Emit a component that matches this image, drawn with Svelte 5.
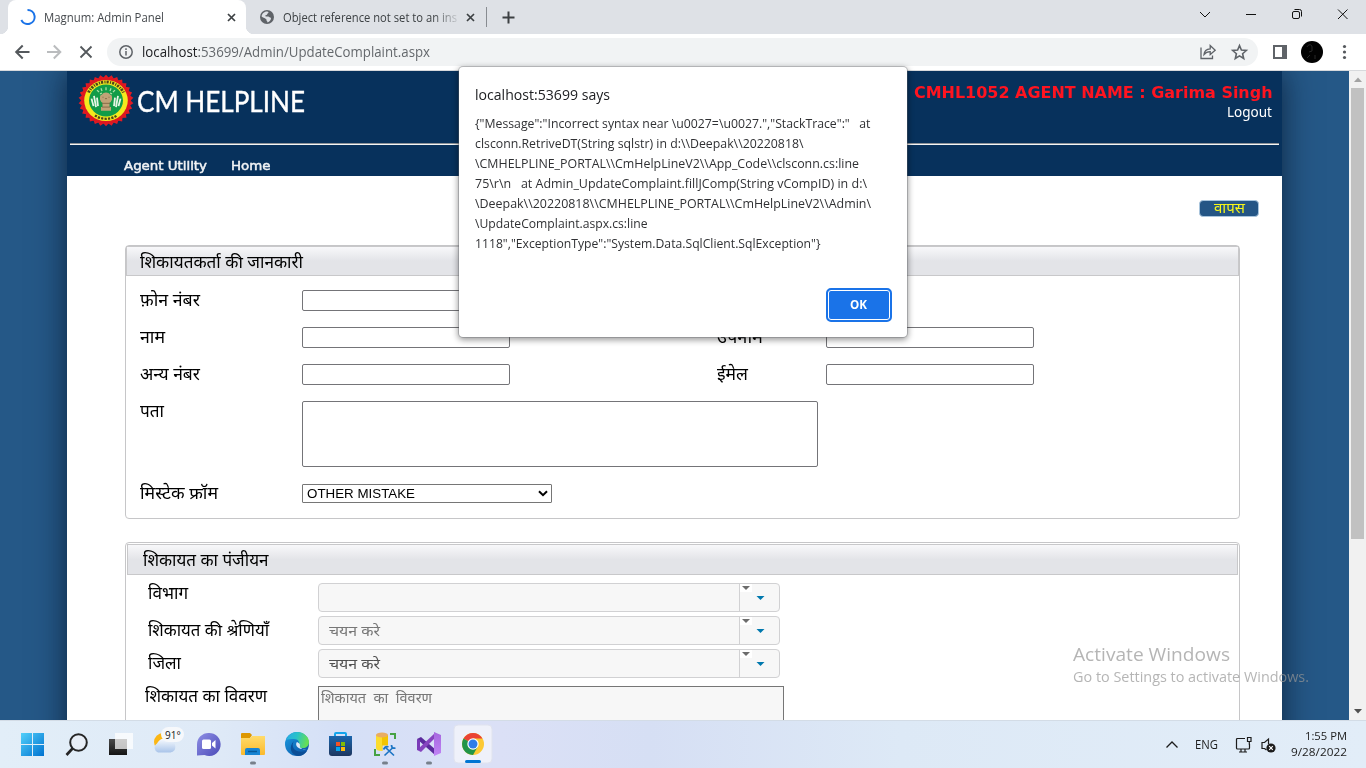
<script>
  // Sets a run of text to an exact advance width.
  function fit(node, width) {
    const natural = node.offsetWidth ? node.getBoundingClientRect().width : width;
    node.style.transform = `scaleX(${width / natural})`;
    node.style.marginRight = `${width - natural}px`;
  }

  const messageLines = [
    ['{"Message":"Incorrect syntax near \\u0027=\\u0027.","StackTrace":"   at', 395.5],
    ['clsconn.RetriveDT(String sqlstr) in d:\\\\Deepak\\\\20220818\\', 328.5],
    ['\\CMHELPLINE_PORTAL\\\\CmHelpLineV2\\\\App_Code\\\\clsconn.cs:line', 384],
    ['75\\r\\n   at Admin_UpdateComplaint.fillJComp(String vCompID) in d:\\', 392],
    ['\\Deepak\\\\20220818\\\\CMHELPLINE_PORTAL\\\\CmHelpLineV2\\\\Admin\\', 396],
    ['\\UpdateComplaint.aspx.cs:line', 172.5],
    ['1118","ExceptionType":"System.Data.SqlClient.SqlException"}', 345.5]
  ];

  const contactRows = [
    { label: 'फ़ोन नंबर', w: 60 },
    { label: 'नाम', w: 25, second: 'उपनाम', w2: 46 },
    { label: 'अन्य नंबर', w: 60, second: 'ईमेल', w2: 31 }
  ];

  const combos = [
    { label: 'विभाग', w: 40, value: '', tone: '' },
    { label: 'शिकायत की श्रेणियाँ', w: 121, value: 'चयन करे', tone: 'soft' },
    { label: 'जिला', w: 33, value: 'चयन करे', tone: 'strong' }
  ];

  const teeth = Array.from({ length: 30 }, (_, i) => i * 12);
</script>

<div class="screen">
  <div class="tabs">
    <div class="tab active">
      <svg class="spin" width="16" height="16" viewBox="0 0 16 16"><path d="M7.500 1A7 7 0 1 1 1.300 11" fill="none" stroke="#1a73e8" stroke-width="2" /></svg>
      <span class="fit ttl" use:fit={120}>Magnum: Admin Panel</span>
      <svg class="x" width="9" height="9" viewBox="0 0 9 9"><path d="M1 1l7 7M8 1L1 8" stroke="#3c4043" stroke-width="1.7" /></svg>
    </div>
    <div class="tab other">
      <svg width="14" height="14" viewBox="0 0 14 14"><circle cx="7" cy="7" r="7" fill="#5f6368" /><path d="M7 1.500c1.800.2 1.900 1.100.9 1.700-1 .5-.4 1.600-1.500 1.800-1.500.3-1.300 1.200-.4 1.500h2.500c.6 1 1.500.7 2.500 1.500 0 2-1.500 4-3.500 4.500 0-1.500-1.300-1.500-1-3C5.500 8 3.500 8.300 1.600 6.500 1.700 4 4 1.500 7 1.500z" fill="#dee1e6" /></svg>
      <span class="clip"><span class="fit ttl" use:fit={174}>Object reference not set to an ins</span></span>
      <svg class="x2" width="9" height="9" viewBox="0 0 9 9"><path d="M1 1l7 7M8 1L1 8" stroke="#3c4043" stroke-width="1.7" /></svg>
      <i class="sep"></i>
      <svg class="plus" width="13" height="13" viewBox="0 0 13 13"><path d="M6.500 .5v12M.5 6.500h12" stroke="#3c4043" stroke-width="2" /></svg>
    </div>
    <svg class="winbtns" width="153" height="14" viewBox="0 0 153 14" fill="none" stroke="#111" stroke-width="1"><path d="M1 4l5 5 5-5M47 6.500h10" /><rect x="93.500" y="3.500" width="7" height="7" rx="1.500" /><path d="M95.500 1.500h5q2 0 2 2v5M139 1.500l9.500 9.500M148.500 1.500l-9.500 9.500" /></svg>
  </div>

  <div class="toolbar">
    <svg width="92" height="18" viewBox="0 0 92 18" fill="none" stroke-width="2"><path d="M15.500 9H2.500M8.700 2.500L2.200 9l6.500 6.500" stroke="#54585c" /><path d="M33 9h13M39.800 2.500L46.300 9l-6.500 6.500" stroke="#babcbe" /><path d="M66.500 3.500l11 11M77.500 3.500l-11 11" stroke="#54585c" stroke-width="1.800" /></svg>
    <div class="omni">
      <svg width="14" height="14" viewBox="0 0 14 14"><circle cx="7" cy="7" r="6.200" fill="none" stroke="#5f6368" stroke-width="1.500" /><path d="M7 6v4.500M7 3.300v1.600" stroke="#5f6368" stroke-width="1.500" /></svg>
      <span class="fit url" use:fit={288}><b>localhost</b>:53699/Admin/UpdateComplaint.aspx</span>
      <svg class="omniicons" width="50" height="18" viewBox="0 0 50 18" fill="none" stroke="#5f6368" stroke-width="1.300"><path d="M1 4.500v11h11.500v-3M4 11.500c.3-4 2.700-5.500 6.200-5.700V2.600l5 4.600-5 4.400V8.700C7.200 8.700 5.500 9.600 4 11.500z" /><path d="M39.500 2.600l1.900 4.500 4.900.4-3.700 3.200 1.100 4.800-4.200-2.600-4.200 2.600 1.100-4.800-3.700-3.200 4.900-.4z" stroke-width="1.600" /></svg>
    </div>
    <svg class="right" width="82" height="22" viewBox="0 0 82 22"><path d="M1 4h14v14H1z" fill="#5f6368" /><path d="M3 6h7v10H3z" fill="#fff" /><circle cx="40" cy="11" r="11" fill="#020202" /><path d="M35 6c1-3 5-3 5 0v4l-3 1M38 14l-3 3M43 14v4" stroke="#292929" fill="none" /><g fill="#54585c"><circle cx="72.500" cy="5.500" r="1.600" /><circle cx="72.500" cy="11" r="1.600" /><circle cx="72.500" cy="16.500" r="1.600" /></g></svg>
  </div>

  <div class="view">
    <div class="page">
      <div class="sheet">
        <header>
          <div class="brandrow">
            <svg class="seal" width="56" height="52" viewBox="0 0 56 52">
              <g transform="translate(28 25.500) scale(1 .94)">
                {#each teeth as a}<path d="M-3 -24L0 -27.500L3 -24z" fill="#e31b23" transform="rotate({a})" />{/each}
                <circle r="24.800" fill="#df1820" />
                <circle r="21.800" fill="#f4ea1e" />
                <path d="M-17.500 -8.500A19.300 19.300 0 0 1 17.500 -8.500" fill="none" stroke="#4c451a" stroke-width="3" stroke-dasharray="2.200 1.200 1.200 1" />
                <path d="M-11 16A19.300 19.300 0 0 0 11 16" fill="none" stroke="#4c451a" stroke-width="2.400" stroke-dasharray="2.200 1.200" />
                <circle r="17" fill="#119c48" />
                <path d="M-14.500 -2l2 8M-12 -5l2 12M-9 -3l1 9M14.500 -2l-2 8M12 -5l-2 12M9 -3l-1 9" stroke="#e7f6e6" stroke-width="1.800" />
                <path d="M-9 -11l2 2M-5 -13l1 3M5 -13l-1 3M9 -11l-2 2M0 -14v3M-6 -7l2-1M6 -7l-2-1" stroke="#a8e0a5" stroke-width="1.300" />
                <path d="M-6 -4q0-2 2-2.500 1-2 4-2t4 2q2 .5 2 2.500v3q-1 3-2.500 3.500v4.500h1.500v4h-10v-4h1.500v-4.500Q-5 2-6 -1z" fill="#c0a377" />
                <path d="M-3.500 -3.500h1M2.500 -3.500h1M-1 -2h2M-4 3h8M-4 7h8" stroke="#7d6542" stroke-width=".9" />
              </g>
            </svg>
            <span class="brand"><span class="fit" use:fit={168}>CM HELPLINE</span></span>
            <div class="agent">
              <div class="name"><span class="fit rt" use:fit={358.5}>CMHL1052 AGENT NAME : Garima Singh</span></div>
              <div class="logout"><span class="fit" use:fit={45}>Logout</span></div>
            </div>
          </div>
          <div class="rule"></div>
          <nav><span class="fit" use:fit={83}>Agent Utility</span><span class="fit" use:fit={39.5}>Home</span></nav>
        </header>

        <div class="back"><button><span class="fit" use:fit={31}>वापस</span></button></div>

        <section class="box one">
          <h2><span class="fit" use:fit={163}>शिकायतकर्ता की जानकारी</span></h2>
          {#each contactRows as r}
            <div class="row">
              <label><span class="fit" use:fit={r.w}>{r.label}</span></label>
              <i class="inp"></i>
              {#if r.second}
                <label class="lab2"><span class="fit" use:fit={r.w2}>{r.second}</span></label>
                <i class="inp"></i>
              {/if}
            </div>
          {/each}
          <div class="row area"><label><span class="fit" use:fit={24}>पता</span></label><i class="inp ta"></i></div>
          <div class="row"><label><span class="fit" use:fit={78}>मिस्टेक फ्रॉम</span></label>
            <div class="sel"><span class="fit" use:fit={108}>OTHER MISTAKE</span><svg width="10" height="7" viewBox="0 0 10 7"><path d="M1 1.200l4 4 4-4" fill="none" stroke="#000" stroke-width="2" /></svg></div>
          </div>
        </section>

        <section class="box two">
          <h2><span class="fit" use:fit={125.5}>शिकायत का पंजीयन</span></h2>
          {#each combos as c}
            <div class="crow">
              <label><span class="fit" use:fit={c.w}>{c.label}</span></label>
              <div class="combo">
                <div class="val {c.tone}">{#if c.value}<span class="fit" use:fit={51}>{c.value}</span>{/if}</div>
                <svg width="39" height="27" viewBox="0 0 39 27"><path d="M0 0h12v8H0z" fill="#fff" /><path d="M2 2h8l-4 4z" fill="#6c6c6c" /><path d="M16.500 12h8l-4 4z" fill="#0078ae" /></svg>
              </div>
            </div>
          {/each}
          <div class="crow detail">
            <label><span class="fit" use:fit={122}>शिकायत का विवरण</span></label>
            <div class="ta2"><span class="fit" use:fit={111}>शिकायत  का  विवरण</span></div>
          </div>
        </section>
      </div>
    </div>
    <div class="scroll">
      <svg width="17" height="17" viewBox="0 0 17 17"><path d="M5 11l4-4.500 4 4.500z" fill="#a3a3a3" /></svg>
      <i></i>
      <svg class="dn" width="17" height="17" viewBox="0 0 17 17"><path d="M5 6l4 4.500L13 6z" fill="#505050" /></svg>
    </div>
  </div>

  <div class="taskbar">
    <div class="apps">
      <svg width="480" height="47" viewBox="0 0 480 47">
        <defs>
          <linearGradient id="win" x2="1" y2="1"><stop stop-color="#52d0fa" /><stop offset="1" stop-color="#0072d0" /></linearGradient>
          <linearGradient id="dark" x2="0" y2="1"><stop stop-color="#4a4a4a" /><stop offset="1" stop-color="#141414" /></linearGradient>
          <linearGradient id="cloud" x2="0" y2="1"><stop stop-color="#f8fbff" /><stop offset="1" stop-color="#a9c4e9" /></linearGradient>
          <linearGradient id="chat" x2="1" y2="1"><stop stop-color="#8f8fe5" /><stop offset="1" stop-color="#4b4bb8" /></linearGradient>
          <linearGradient id="fold" x2="0" y2="1"><stop stop-color="#ffdb6b" /><stop offset="1" stop-color="#fbb92b" /></linearGradient>
          <linearGradient id="edge1" x2="1" y2=".2"><stop stop-color="#2aa9e6" /><stop offset=".5" stop-color="#28c2c9" /><stop offset="1" stop-color="#66df55" /></linearGradient>
          <linearGradient id="edge2" x2="1" y2="1"><stop stop-color="#1a9de2" /><stop offset="1" stop-color="#0c4da1" /></linearGradient>
          <linearGradient id="store" x2="0" y2="1"><stop stop-color="#1b66ad" /><stop offset="1" stop-color="#1d365f" /></linearGradient>
          <linearGradient id="vs" x2="0" y2="1"><stop stop-color="#a668df" /><stop offset="1" stop-color="#c184f5" /></linearGradient>
        </defs>
        <path d="M21 12h11v11H21zM33 12h11v11H33zM21 24h11v11H21zM33 24h11v11H33z" fill="url(#win)" />
        <circle cx="78.500" cy="21.500" r="8.300" fill="#e8eef6" stroke="#252525" stroke-width="2" /><path d="M72.500 27.500l-6 6.500" stroke="#252525" stroke-width="2.600" />
        <path d="M109 18h18v16h-18z" fill="url(#dark)" /><path d="M115 12h18v16h-18z" fill="#fff" fill-opacity=".72" />
        <circle cx="163" cy="21" r="9" fill="#fbb614" /><path d="M158 31.500a5 5 0 0 1-1-9 8 8 0 0 1 13-2.500 5.800 5.800 0 0 1 .5 11.500z" fill="url(#cloud)" />
        <rect x="161" y="6" width="23" height="15" rx="7.500" fill="#f6f8fb" />
        <path d="M208.500 12a11.500 11.500 0 1 1-4 22l-7.500.5v-11A11.500 11.500 0 0 1 208.500 12z" fill="url(#chat)" /><rect x="202" y="18.500" width="9" height="9.500" rx="1.500" fill="#fff" /><path d="M212 22l3.500-3v8.500l-3.500-3z" fill="#fff" />
        <path d="M241 13q0-1 1-1h8l2 2-2 3h-9z" fill="#dd9700" /><path d="M241 17h9l2-2h13v18q0 1-1 1h-22q-1 0-1-1z" fill="url(#fold)" /><path d="M245 34v-5q0-2 2-2h11q2 0 2 2v5z" fill="#1784d3" /><path d="M248 30.500h9" stroke="#075999" stroke-width="1.500" />
        <circle cx="297" cy="23" r="12" fill="url(#edge2)" /><path d="M286 19c2-5 6-8 11-8 7 0 12 5 12 10 0 4-3 6-6 6-4 0-5-1-4-3 1-3-1-6-5-6-3 0-6 0-8 1z" fill="url(#edge1)" /><path d="M294 20c-4 6 1 13 13 10-2 3-5 5-9 5-7-1-10-9-4-15z" fill="#0b4e96" /><path d="M297 21c-2 2-1 8 9 7-3 1-7-1-6-4 0-1-1-2-3-3z" fill="#dfe9f8" />
        <path d="M335 17v-4q0-1 1-1h9q1 0 1 1v4" fill="none" stroke="#12a5ec" stroke-width="2" /><path d="M329 15h23v17q0 3-3 3h-17q-3 0-3-3z" fill="url(#store)" /><path d="M336 21h4v4h-4z" fill="#f35325" /><path d="M341 21h4v4h-4z" fill="#81bc06" /><path d="M336 26h4v4h-4z" fill="#05a6f0" /><path d="M341 26h4v4h-4z" fill="#ffba08" />
        <path d="M376 14v13q0 3 6 3t6-3V14z" fill="#fbdc2e" /><path d="M382 14h6v13q0 2-6 3z" fill="#f3c400" /><ellipse cx="382" cy="14" rx="6" ry="2.500" fill="#e9ad62" /><path d="M390 13h5v5M375 28v6h5" fill="none" stroke="#45a244" stroke-width="2" /><path d="M382.500 24.500h13v11h-13z" fill="#d8e0f6" /><path d="M385 26l9 8.500M393 26.500l-8.500 8" stroke="#1c75c4" stroke-width="1.700" /><path d="M383.500 28.500q2-4 5-2.500M391.500 24q0 4 4 3" stroke="#1c75c4" stroke-width="1.800" fill="none" />
        <path d="M417 18l4-2 15 13-1 5z" fill="#5b2a9d" /><path d="M417 29l4 2 15-15-1-4z" fill="#8644bf" /><path d="M417 18l3 1v10l-3 0z" fill="#7a3bb8" /><path d="M434 11l7 3v18l-7 3z" fill="url(#vs)" />
        <path d="M251.500 42h3M383.500 42h3M427.500 42h3" stroke="#77808b" stroke-width="3" stroke-linecap="round" />
      </svg>
      <svg class="chrome" width="38" height="38" viewBox="0 0 38 38">
        <rect width="38" height="38" rx="4" fill="#eff1fa" stroke="#e0e3ee" />
        <circle cx="19" cy="19" r="11" fill="#fcc934" /><path d="M19 19L9.500 13.500A11 11 0 0 1 28.500 13.500H19z" fill="#ea4335" /><path d="M19 19L9.500 13.500A11 11 0 0 0 19 30l4.800-8.500z" fill="#229548" /><circle cx="19" cy="19" r="5.700" fill="#fff" /><circle cx="19" cy="19" r="4.500" fill="#2f7de9" /><rect x="11" y="35" width="16" height="3" rx="1.500" fill="#0075d3" />
      </svg>
      <span class="temp">91°</span>
    </div>
    <div class="tray">
      <svg width="12" height="7" viewBox="0 0 12 7"><path d="M.5 6.500L6 1l5.500 5.500" fill="none" stroke="#1c1c1c" stroke-width="1.300" /></svg>
      <span class="fit" use:fit={23}>ENG</span>
      <svg class="net" width="41" height="18" viewBox="0 0 41 18" fill="none" stroke="#1c1c1c" stroke-width="1.200"><path d="M10 2.500H2.500q-1 0-1 1v8.500q0 1 1 1h11q1 0 1-1V8M4 16h8M6 13v3M10 13v3" /><path d="M12.500 1.500h3.500v4h-3.500zM14.300 5.500v3" /><path d="M33.500 8V3l-4 3.500H27v6h2.500l2 1.500" /><circle cx="36" cy="12" r="4.600" fill="#1c1c1c" stroke="none" /><path d="M34.200 10.200l3.600 3.600M37.800 10.200l-3.600 3.600" stroke="#fff" /></svg>
      <div class="clock"><div><span class="fit" use:fit={42}>1:55 PM</span></div><div><span class="fit" use:fit={56}>9/28/2022</span></div></div>
    </div>
  </div>

  <div class="dialog">
    <h1><span class="fit" use:fit={135}>localhost:53699 says</span></h1>
    {#each messageLines as [text, w]}<p><span class="fit" use:fit={w}>{text}</span></p>{/each}
    <div class="ok"><span class="fit" use:fit={17}>OK</span></div>
  </div>

  <div class="mark"><div class="m1"><span class="fit" use:fit={157}>Activate Windows</span></div><div class="m2"><span class="fit" use:fit={236}>Go to Settings to activate Windows.</span></div></div>
</div>

<style>
  :global(body) { overflow: hidden; }
  .screen { position: relative; width: 1366px; height: 768px; overflow: hidden; display: flex; flex-direction: column; font-family: "Open Sans", "Noto Sans", sans-serif; box-sizing: border-box; background: #fff; }
  .screen :where(div, i, header, section, nav, button, h2, label) { box-sizing: border-box; }
  svg { display: block; flex: none; }
  .fit { display: inline-block; white-space: pre; transform-origin: 0 50%; flex: none; }

  .tabs { height: 34px; flex: none; background: #dee1e6; display: flex; align-items: center; padding-left: 8px; }
  .tab { display: flex; align-items: center; height: 34px; font-size: 12px; color: #3c4043; }
  .active { position: relative; width: 238px; background: #fff; border-radius: 8px 8px 0 0; padding-left: 12px; color: #45494d; }
  .active::before, .active::after { content: ""; position: absolute; bottom: 0; width: 8px; height: 8px; }
  .active::before { left: -8px; background: radial-gradient(circle at 0 0, transparent 8px, #fff 8.500px); }
  .active::after { right: -8px; background: radial-gradient(circle at 100% 0, transparent 8px, #fff 8.500px); }
  .spin { margin-right: 8px; }
  .x { margin-left: 63px; }
  .other { padding-left: 14px; }
  .clip { display: flex; width: 174px; margin-left: 9px; margin-right: -1px; mask-image: linear-gradient(90deg, #000 150px, rgba(0, 0, 0, .15) 174px); }
  .x2 { margin-left: 10px; }
  .sep { width: 1px; height: 20px; background: #888c91; margin-left: 11px; }
  .plus { margin-left: 15px; }
  .winbtns { margin-left: auto; margin-right: 14px; margin-bottom: 4px; }

  .toolbar { height: 37px; flex: none; display: flex; align-items: center; padding: 0 12px 0 14px; border-bottom: 1px solid #d7d9dc; background: #fff; }
  .omni { width: 1151px; height: 28px; margin-left: 1px; border-radius: 14px; background: #f1f3f4; display: flex; align-items: center; padding-left: 12px; }
  .url { margin-left: 9px; margin-bottom: 1px; font-size: 14px; color: #64686c; }
  .url b { font-weight: 400; color: #202124; }
  .omniicons { margin-left: auto; margin-right: 8px; }
  .right { margin-left: 14px; }

  .view { height: 649px; flex: none; display: flex; overflow: hidden; }
  .page { width: 1349px; height: 649px; padding-left: 67px; background: #255887; overflow: hidden; }
  .sheet { width: 1215px; height: 760px; background: #fff; box-shadow: 0 0 30px 0 rgba(5, 20, 40, .75); }
  header { height: 105px; background: #07315c; padding: 0 3px; }
  .brandrow { display: flex; height: 72px; padding: 4px 7px 0 8px; }
  .brand { font: 400 29.500px/36px Lato, sans-serif; color: #fff; padding: 8px 0 0 3px; -webkit-text-stroke: .4px #fff; }
  .agent { margin-left: auto; color: #fff; display: flex; flex-direction: column; align-items: flex-end; }
  .name { font: 700 16px/20px "DejaVu Sans", sans-serif; color: #ff1420; padding-top: 8px; }
  .logout { font: 400 14px/18px "Noto Sans", sans-serif; }
  .rule { height: 2px; background: linear-gradient(#8d9298 50%, #f5f5f5 50%); }
  nav { display: flex; gap: 23.500px; padding: 12px 0 0 54px; font: 400 12.700px/18px "DejaVu Sans", sans-serif; color: #f1f3f5; -webkit-text-stroke: .5px #f1f3f5; }

  .back { display: flex; justify-content: flex-end; padding: 24px 23px 0 0; height: 69px; }
  button { width: 60px; height: 17px; padding: 0 0 0 14px; background: #245585; border: 1px solid #a9c5dd; border-radius: 4px; color: #f6f619; font: 15px/13px "Noto Sans", sans-serif; text-align: left; display: flex; }
  .box { width: 1115px; margin-left: 58px; border: 1px solid #c6c6c8; border-radius: 4px; font: 17px/22px "Noto Sans", "Noto Sans Devanagari", sans-serif; color: #000; }
  h2 { margin: 0; font: inherit; display: flex; border: 1px solid #c8c8ca; background: linear-gradient(#f8f8fa 0, #e3e4e8 50%, #e3e4e8); }
  .one { height: 274px; }
  .one h2 { height: 30px; padding: 4px 0 0 13px; }
  .row { height: 37px; padding: 14px 0 0 14px; display: flex; }
  label { display: block; width: 162px; height: 22px; flex: none; white-space: nowrap; margin-top: -1px; }
  .inp { width: 208px; height: 21px; border: 1px solid #747478; border-radius: 2px; flex: none; }
  .lab2 { width: 109px; margin-left: 207px; }
  .area { height: 82px; }
  .ta { width: 516px; height: 66px; }
  .sel { width: 250px; height: 19px; margin-top: 1px; border: 1px solid #767676; border-radius: 1px; display: flex; align-items: center; justify-content: space-between; padding: 0 3px 0 4px; font: 13.500px/17px "Liberation Sans", sans-serif; }
  .two { height: 240px; margin-top: 23px; padding: 1px 1px 0 1px; }
  .two h2 { height: 31px; margin-bottom: 8px; padding: 4px 0 0 15px; }
  .crow { display: flex; height: 33px; padding-left: 21px; }
  .crow label { width: 170px; margin-top: -1px; }
  .crow + .crow label { margin-top: 3px; }
  .combo { width: 462px; height: 29px; border: 1px solid #d1d1d3; border-radius: 4px; background: #f7f7f7; display: flex; overflow: hidden; }
  .val { flex: 1; border-right: 1px solid #d1d1d3; padding: 2px 0 0 10px; font-size: 15px; color: #777; }
  .strong { color: #505050; }
  .detail { padding: 4px 0 0 18px; height: 60px; }
  .crow.detail label { width: 173px; margin-top: -1px; }
  .ta2 { width: 466px; height: 56px; border: 1px solid #767676; background: #f7f7f7; padding: 0 2px; font-size: 14px; color: #777; }

  .scroll { width: 17px; background: #f1f1f1; display: flex; flex-direction: column; }
  .scroll i { width: 13px; height: 451px; margin-left: 2px; background: #c1c1c1; }
  .dn { margin-top: auto; }

  .taskbar { height: 48px; flex: none; display: flex; justify-content: space-between; background: linear-gradient(90deg, #e2eef8 0, #dfeaf7 210px, #d5e0f7 340px, #dbe0f6 500px, #d6dff4 650px, #dde9f6 900px, #e2edf8); border-top: 1px solid #d3dce6; }
  .apps { position: relative; width: 500px; }
  .chrome { position: absolute; left: 454px; top: 4px; overflow: visible; }
  .temp { position: absolute; left: 165px; top: 7px; font-size: 10px; line-height: 14px; color: #222; }
  .tray { display: flex; align-items: center; padding: 0 19px 0 0; font-size: 12px; color: #1c1c1c; }
  .tray > .fit { margin-left: 17px; }
  .net { margin: 0 14px 0 17px; }
  .clock { width: 57px; display: flex; flex-direction: column; align-items: flex-end; font-size: 11px; line-height: 16px; padding-bottom: 1px; }

  .dialog { position: absolute; left: 459px; top: 67px; width: 448px; height: 270px; box-sizing: border-box; padding: 17px 16px; background: #fff; border-radius: 4px; box-shadow: 0 0 0 1px rgba(100, 104, 110, .35), 0 2px 6px 1px rgba(0, 0, 0, .4); color: #202124; }
  h1 { margin: 0 0 9px; font-size: 15px; line-height: 21px; font-weight: 400; }
  p { margin: 0; font-size: 12.500px; line-height: 20px; color: #303134; }
  .ok { width: 66px; height: 34px; margin: 34px 0 0 351px; padding: 0 2px 1px 0; border: 2px solid #1a73e8; border-radius: 5px; background: #1a73e8; box-shadow: inset 0 0 0 1px #fff; color: #fff; font-weight: 700; font-size: 12px; display: flex; align-items: center; justify-content: center; }
  .mark { position: absolute; left: 1073px; top: 641px; color: rgba(150, 150, 150, .7); }
  .m1 { font-size: 19px; line-height: 26px; }
  .m2 { font-size: 14px; line-height: 20px; }
</style>
